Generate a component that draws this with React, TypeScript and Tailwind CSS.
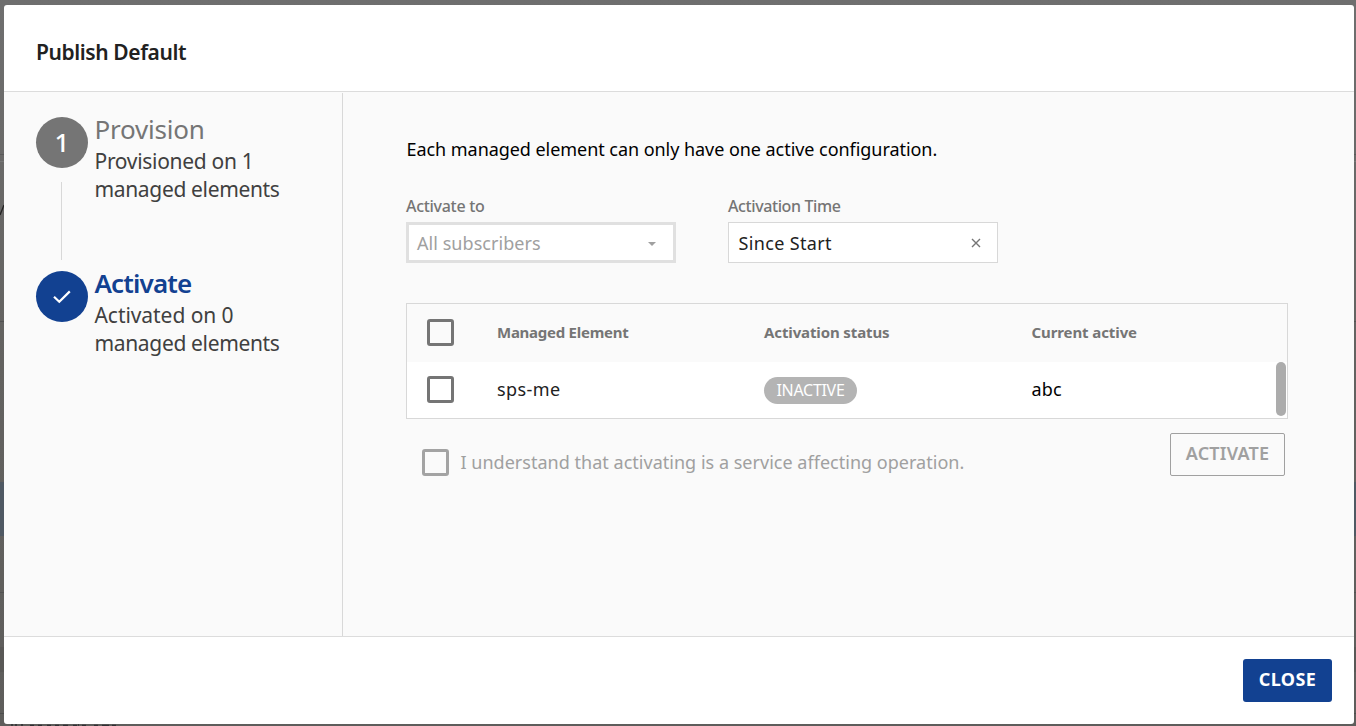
import React from "react";

function Checkbox({ tone = "border-[#757575]" }: { tone?: string }) {
  return <span className={`block h-[27px] w-[27px] shrink-0 rounded-[3px] border-3 ${tone}`} />;
}

function Step({
  marker,
  title,
  lines,
}: {
  marker: React.ReactNode;
  title: React.ReactNode;
  lines: React.ReactNode;
}) {
  return (
    <div className="flex h-[91px] items-start">
      <div className="mt-1 w-[58.5px] shrink-0">{marker}</div>
      <div>
        {title}
        <div className="mt-[2px] whitespace-nowrap text-[21px] leading-[28px] text-[#404040]">{lines}</div>
      </div>
    </div>
  );
}

function Backdrop() {
  return (
    <div className="absolute inset-0 bg-linear-to-b from-[#6f6f6f] via-[#636260] to-[#5e5d5b]">
      <div className="flex h-full w-full flex-col">
        <div className="mt-[154px] h-px bg-[#5a5a5a]" />
        <div className="mt-[6px] h-px bg-[#777]" />
        <div className="mt-[159px] h-px bg-[#525252]" />
        <div className="mt-[160px] h-[54px] bg-[#4f5963]" />
        <div className="mt-[56px] h-px bg-[#525252]" />
        <div className="mt-[54px] h-[25px] bg-[#595856]" />
        <div className="mt-[41px] h-px bg-[#4d4d4d]" />
      </div>
      <svg className="absolute left-0 top-[204px]" width="4" height="12" viewBox="0 0 4 12">
        <path d="M0 11L4 1" stroke="#222" strokeWidth="1.3" />
      </svg>
      <svg className="absolute left-[10px] top-[724px]" width="110" height="2" viewBox="0 0 110 2">
        <path
          d="M1 1h2M5 1h2M11 1h2M20 1.5h4M28 1.5h4M37 1.5h4M45 1.5h4M53 1.5h5M63 1.5h4M68 1h1M72 1.5h4M84 1.5h4M92 1.5h7M102 1.5h4"
          stroke="#2f2f33"
          strokeWidth="1.5"
        />
      </svg>
    </div>
  );
}

export default function App() {
  return (
    <div className="relative h-[726px] w-[1356px] overflow-hidden font-['Noto_Sans',sans-serif]">
      <Backdrop />
      <div className="relative pl-1 pt-[5px]">
        <div className="flex h-[719px] w-[1350px] flex-col overflow-hidden rounded-[3px] bg-white">
          <header className="h-[87px] shrink-0 border-b border-[#dcdcdc] pl-8 pt-[33px]">
            <h1 className="text-[21px] font-semibold leading-[28px] tracking-[-0.4px] text-[#212121]">Publish Default</h1>
          </header>

          <div className="flex h-[544px] shrink-0 bg-[#fafafa]">
            <aside className="mt-px w-[339px] shrink-0 border-r border-[#d8d8d8] pl-8 pt-[20px]">
              <Step
                marker={
                  <span className="flex h-[51px] w-[52px] items-center justify-center rounded-[50%] bg-[#757575] pb-px text-[26px] font-medium leading-none text-white">
                    1
                  </span>
                }
                title={<h2 className="text-[26px] leading-[32px] tracking-[-0.22px] text-[#757575]">Provision</h2>}
                lines={
                  <>
                    <p className="tracking-[-0.3px]">Provisioned on 1</p>
                    <p className="tracking-[-0.34px]">managed elements</p>
                  </>
                }
              />
              <div className="-mt-[22px] mb-[7px] ml-[25px] h-[78px] w-px bg-[#d8d8d8]" />
              <Step
                marker={
                  <span className="flex h-[51px] w-[52px] items-center justify-center rounded-[50%] bg-[#124191]">
                    <svg width="18" height="14" viewBox="0 0 18 14" fill="none">
                      <path d="M1 6.8L6.3 11.8L16.8 1.4" stroke="#fff" strokeWidth="2.2" />
                    </svg>
                  </span>
                }
                title={
                  <h2 className="text-[26px] font-semibold leading-[32px] tracking-[-0.85px] text-[#124191]">Activate</h2>
                }
                lines={
                  <>
                    <p className="tracking-[-0.06px]">Activated on 0</p>
                    <p className="tracking-[-0.34px]">managed elements</p>
                  </>
                }
              />
            </aside>

            <main className="w-[945px] pl-[63px] pt-[43px]">
              <p className="pl-[0.5px] text-[18px] leading-[28px] tracking-[-0.05px] text-black">
                Each managed element can only have one active configuration.
              </p>

              <div className="mt-[31px] flex gap-[52px]">
                <div className="w-[270px]">
                  <div className="text-[16px] font-medium leading-[24px] tracking-[-0.3px] text-[#757575]">Activate to</div>
                  <div className="mt-[4px] flex h-[41px] items-center justify-between border-3 border-[#e0e0e0] bg-white pl-[8px] pr-[17px]">
                    <span className="text-[18px] leading-[28px] tracking-[0.05px] text-[#a0a0a0]">All subscribers</span>
                    <svg className="mt-[3px]" width="8" height="4" viewBox="0 0 8 4">
                      <path d="M0 0h8L4 4z" fill="#a0a0a0" />
                    </svg>
                  </div>
                </div>
                <div className="w-[270px]">
                  <div className="text-[16px] font-medium leading-[24px] tracking-[-0.4px] text-[#757575]">
                    Activation Time
                  </div>
                  <div className="mt-[4px] flex h-[41px] items-center justify-between border border-[#d8d8d8] bg-white pl-[9.5px] pr-[16px]">
                    <span className="text-[18px] leading-[28px] tracking-[0.35px] text-[#212121]">Since Start</span>
                    <svg className="mt-px" width="10" height="10" viewBox="0 0 10 10">
                      <path d="M1 1l8 8M9 1L1 9" stroke="#757575" strokeWidth="1.4" />
                    </svg>
                  </div>
                </div>
              </div>

              <div className="mt-[40px] h-[116px] w-[882px] border border-[#d8d8d8]">
                <div className="grid h-[58px] grid-cols-[90px_267px_267.5px_1fr] items-center pb-[2px] text-[15px] font-bold text-[#757575]">
                  <div className="pl-[19.5px]">
                    <Checkbox />
                  </div>
                  <div className="tracking-[-0.26px]">Managed Element</div>
                  <div className="tracking-[-0.12px]">Activation status</div>
                  <div className="tracking-[-0.1px]">Current active</div>
                </div>
                <div className="relative grid h-[56px] grid-cols-[90px_267px_267.5px_1fr] items-center bg-white pb-[2px] text-[18px]">
                  <div className="pl-[19.5px]">
                    <Checkbox />
                  </div>
                  <div className="leading-[28px] tracking-[0.4px] text-[#212121]">sps-me</div>
                  <div>
                    <span className="mt-[2px] flex h-[27px] w-[93px] items-center justify-center rounded-full bg-[#b4b4b4] pb-px text-[16px] leading-[26px] tracking-[-0.3px] text-white">
                      INACTIVE
                    </span>
                  </div>
                  <div className="leading-[28px] tracking-[0.2px] text-black">abc</div>
                  <span className="absolute right-px top-0 h-[54px] w-[10px] rounded-full bg-[#acacac]" />
                </div>
              </div>

              <div className="mt-[14px] flex w-[879px] items-start justify-between pl-4">
                <div className="mt-4 flex items-center gap-[11.5px]">
                  <Checkbox tone="border-[#a3a3a3]" />
                  <span className="text-[18px] leading-[27px] tracking-[0.02px] text-[#a0a0a0]">
                    I understand that activating is a service affecting operation.
                  </span>
                </div>
                <button className="flex h-[43px] w-[115px] items-center justify-center rounded-[2px] border border-[#a0a0a0] pb-[3px] text-[18px] font-semibold tracking-[0.2px] text-[#a0a0a0]">
                  ACTIVATE
                </button>
              </div>
            </main>
          </div>

          <footer className="flex flex-1 items-start justify-end border-t border-[#dcdcdc] pr-[22px] pt-[22px]">
            <button className="flex h-[43px] w-[89px] items-center justify-center rounded-[3px] bg-[#124191] pb-[3px] text-[18px] font-bold tracking-[0.45px] text-white">
              CLOSE
            </button>
          </footer>
        </div>
      </div>
    </div>
  );
}
